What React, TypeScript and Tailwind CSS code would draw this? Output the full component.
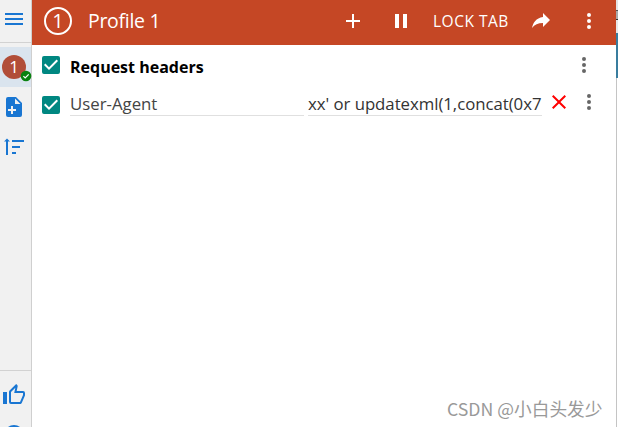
import clsx from 'clsx';

const paths = {
  menu: 'M3 6h18v2H3zM3 11h18v2H3zM3 16h18v2H3z',
  plus: 'M19 13h-6v6h-2v-6H5v-2h6V5h2v6h6z',
  pause: 'M6 19h4V5H6zM14 5v14h4V5z',
  share: 'M21 11l-7-7v4C7 9 4 14 3 19c2.5-3.5 6-5.1 11-5.1V18z',
  dots: 'M12 8a2 2 0 1 0 0-4 2 2 0 0 0 0 4zM12 10a2 2 0 1 0 0 4 2 2 0 0 0 0-4zM12 16a2 2 0 1 0 0 4 2 2 0 0 0 0-4z',
  close: 'M19 6.41L17.59 5 12 10.59 6.41 5 5 6.41 10.59 12 5 17.59 6.41 19 12 13.41 17.59 19 19 17.59 13.41 12z',
  checkbox: 'M19 3H5a2 2 0 0 0-2 2v14a2 2 0 0 0 2 2h14a2 2 0 0 0 2-2V5a2 2 0 0 0-2-2zM10 17l-5-5 1.41-1.41L10 14.17l7.59-7.59L19 8z',
  filePlus: 'M14 2H6a2 2 0 0 0-2 2v16a2 2 0 0 0 2 2h12a2 2 0 0 0 2-2V8zM14 16h-3v3H9v-3H6v-2h3v-3h2v3h3zM13 9V3.5L18.5 9z',
  sort: 'M10 13h8v2h-8zM10 19h4v2h-4zM10 7h12v2H10zM6 8.5v13.5H4V8.5H2l3-3 3 3z',
  thumb: 'M5 9v12H1V9zM9 21a2 2 0 0 1-2-2V9c0-.55.22-1.05.59-1.41L14.17 1l1.06 1.06c.27.27.44.64.44 1.05l-.03.32L14.69 8H21a2 2 0 0 1 2 2v2c0 .26-.05.5-.14.73l-3.02 7.05C19.54 20.5 18.83 21 18 21zM9 19h9.03L21 12v-2h-8.79l1.13-5.32L9 9.03z',
  help: 'M12 2a10 10 0 1 0 0 20 10 10 0 0 0 0-20z',
};

function Icon({ name, className }: { name: keyof typeof paths; className?: string }) {
  return (
    <svg viewBox="0 0 24 24" fill="currentColor" className={clsx('block size-6 shrink-0', className)}>
      <path fillRule="evenodd" d={paths[name]} />
    </svg>
  );
}

function Sidebar() {
  return (
    <aside className="flex w-8 shrink-0 flex-col border-r border-[#cfcfcf] bg-[#f1f1f1] text-[#1976d2]">
      <button type="button" aria-label="Menu" className="flex h-[43px] items-start border-b border-[#d2d2d2] pl-0.5 pt-[7px]">
        <Icon name="menu" />
      </button>
      <div className="mt-1 flex h-10 items-center bg-[#dae4ee] pl-0.5">
        <div className="relative flex size-6 items-center justify-center rounded-full bg-[#b14d38] text-[17px] leading-6 text-white">
          1
          <svg viewBox="0 0 12 12" className="absolute left-[18px] top-[15px] size-3">
            <circle cx="6" cy="6" r="5.3" fill="#0a8210" />
            <path d="M3.4 6.2l1.8 1.8 3.5-3.7" fill="none" stroke="white" strokeWidth="1.2" />
          </svg>
        </div>
      </div>
      <button type="button" aria-label="New profile" className="flex h-10 items-start pl-0.5 pt-2">
        <Icon name="filePlus" />
      </button>
      <button type="button" aria-label="Sort profiles" className="flex h-10 items-start pl-0.5 pt-1.5">
        <Icon name="sort" />
      </button>
      <div className="mt-auto h-[57px] shrink-0 overflow-hidden border-t border-[#d2d2d2] pl-0.5 pt-3">
        <Icon name="thumb" />
        <Icon name="help" className="mt-4" />
      </div>
    </aside>
  );
}

function Header() {
  return (
    <header className="flex h-[45px] shrink-0 items-center bg-[#c54725] pl-3 pr-[15px] pb-[3px] text-white">
      <div className="-mt-px flex size-7 shrink-0 items-center justify-center rounded-full border-2 border-white text-xl leading-6">
        1
      </div>
      <h1 className="ml-4 text-[19.5px] leading-6 tracking-[-0.3px]">Profile 1</h1>
      <div className="ml-auto flex items-center">
        <Icon name="plus" />
        <Icon name="pause" className="ml-6" />
        <span className="ml-5 w-[76px] whitespace-nowrap text-[15.5px] leading-6 tracking-[0.5px]">LOCK TAB</span>
        <Icon name="share" className="ml-5" />
        <Icon name="dots" className="ml-6" />
      </div>
    </header>
  );
}

export default function App() {
  return (
    <div className="relative flex h-[427px] w-[618px] overflow-hidden bg-white font-['Open_Sans','Noto_Sans_CJK_SC',sans-serif]">
      <Sidebar />
      <div className="flex w-[584px] shrink-0 flex-col">
        <Header />
        <main className="pl-[7px] pr-[15px] pt-2">
          <div className="flex h-10 items-start">
            <Icon name="checkbox" className="text-[#008781]" />
            <h2 className="ml-[7px] mt-0.5 text-base leading-6 font-bold text-black">Request headers</h2>
            <Icon name="dots" className="ml-auto mr-[5px] text-[#666]" />
          </div>
          <div className="flex items-start">
            <Icon name="checkbox" className="text-[#008781]" />
            <div className="ml-[7px] h-[23px] w-[234px] border-b border-[#e0e0e0] text-[16.8px] leading-[22px] text-[#444]">
              User-Agent
            </div>
            <div className="ml-1 h-[23px] w-[234px] overflow-hidden whitespace-nowrap border-b border-[#e0e0e0] text-[16.8px] leading-[22px] tracking-[-0.04px] text-[#333]">
              xx' or updatexml(1,concat(0x7
            </div>
            <Icon name="close" className="-mt-[3px] ml-[5px] text-[#f00]" />
            <Icon name="dots" className="-mt-[3px] ml-auto text-[#666]" />
          </div>
        </main>
      </div>
      <div className="flex w-0.5 flex-col">
        <div className="h-[11px] border-b border-[#555] bg-[#e4e4e4]" />
        <div className="h-[9px] border-b border-[#333] bg-[#aaa]" />
        <div className="h-[13px] bg-[#e8e8e8]" />
        <div className="h-[45px] bg-[#397d9e]" />
        <div className="flex-1 border-l border-[#c4c4c4]" />
      </div>
      <div className="absolute left-[447px] top-[396px] whitespace-nowrap font-['Noto_Sans_CJK_SC',sans-serif] text-[17.7px] leading-6 text-[#999]">
        CSDN @小白头发少
      </div>
    </div>
  );
}
